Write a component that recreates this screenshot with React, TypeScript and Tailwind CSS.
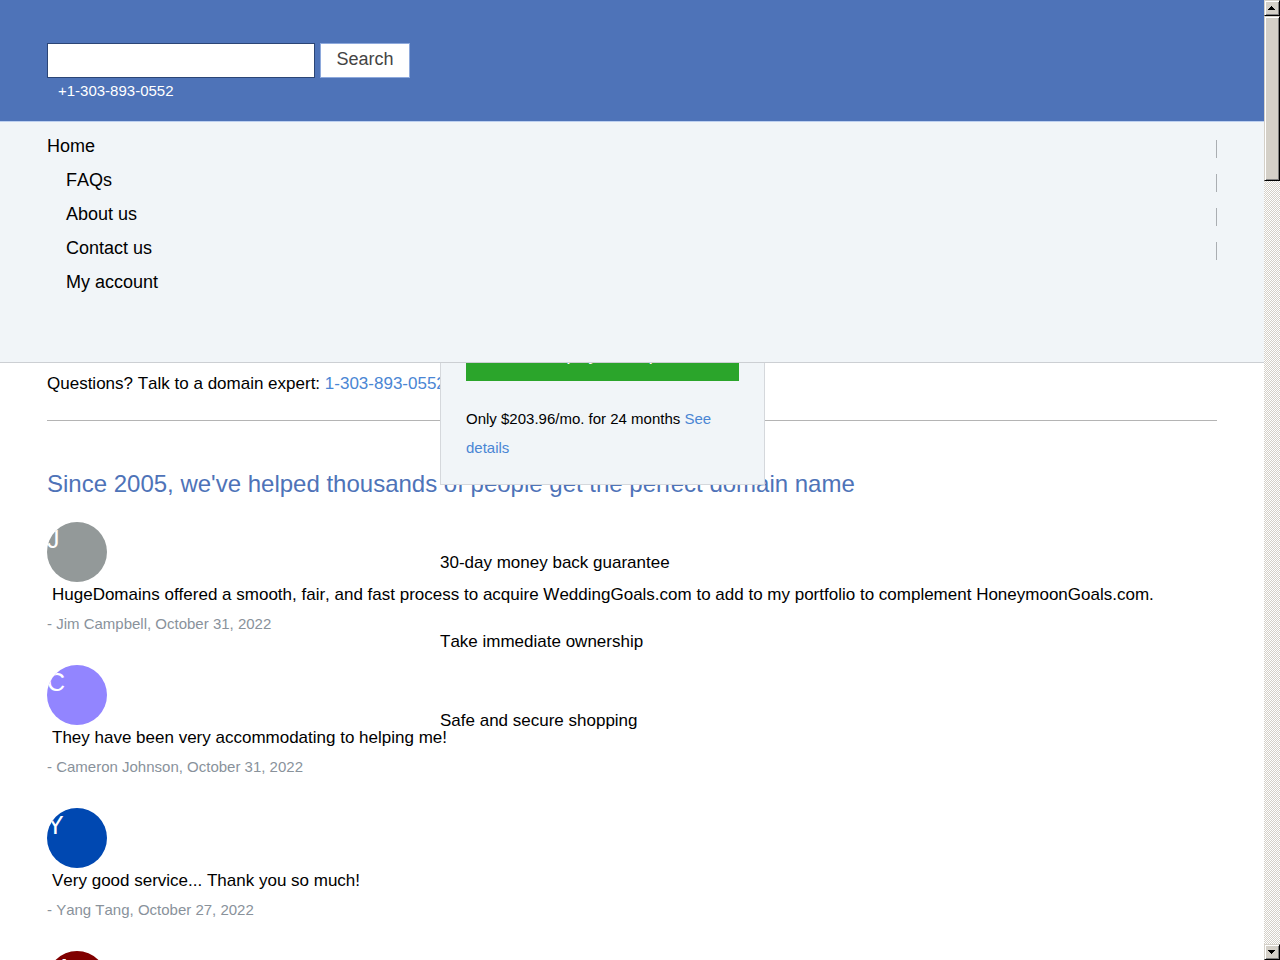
import React from "react";

const navLinks = ["Home", "FAQs", "About us", "Contact us", "My account"];

const guarantees = [
  "30-day money back guarantee",
  "Take immediate ownership",
  "Safe and secure shopping"
];

const testimonials = [
  {
    initial: "J",
    color: "bg-[#939999]",
    quote: "HugeDomains offered a smooth, fair, and fast process to acquire WeddingGoals.com to add to my portfolio to complement HoneymoonGoals.com.",
    author: "Jim Campbell, October 31, 2022"
  },
  {
    initial: "C",
    color: "bg-[#9285ff]",
    quote: "They have been very accommodating to helping me!",
    author: "Cameron Johnson, October 31, 2022"
  },
  {
    initial: "Y",
    color: "bg-[#0048b1]",
    quote: "Very good service... Thank you so much!",
    author: "Yang Tang, October 27, 2022"
  },
  {
    initial: "M",
    color: "bg-[#800000]",
    quote: "",
    author: ""
  }
];

function ScrollButton({ label, path }: { label: string; path: string }) {
  return (
    <button
      type="button"
      aria-label={label}
      className="h-4 w-4 shrink-0 border border-t-[#d4d0c8] border-l-[#d4d0c8] border-r-black border-b-black bg-[#d4d0c8] shadow-[inset_1px_1px_0_#ffffff,inset_-1px_-1px_0_#808080]"
    >
      <svg viewBox="0 0 14 14" className="h-full w-full" shapeRendering="crispEdges">
        <path d={path} fill="#000000" />
      </svg>
    </button>
  );
}

function Scrollbar() {
  return (
    <div className="flex w-4 shrink-0 flex-col bg-[repeating-conic-gradient(#d4d0c8_0%_25%,#ffffff_0%_50%)] bg-[length:2px_2px]">
      <ScrollButton label="Scroll up" path="M6 5h1v1h1v1h1v1h1v1H3V8h1V7h1V6h1z" />
      <div className="h-[165px] border border-t-[#d4d0c8] border-l-[#d4d0c8] border-r-black border-b-black bg-[#d4d0c8] shadow-[inset_1px_1px_0_#ffffff,inset_-1px_-1px_0_#808080]" />
      <div className="flex-1" />
      <ScrollButton label="Scroll down" path="M3 5h7v1H9v1H8v1H7v1H6V8H5V7H4V6H3z" />
    </div>
  );
}

function Header() {
  return (
    <header className="relative z-20">
      <div className="bg-[#4e73b8] px-[47px] pt-[43px] pb-[18px]">
        <form className="flex gap-[5px]" onSubmit={(e) => e.preventDefault()}>
          <input
            type="text"
            aria-label="Search domains"
            className="h-[35px] w-[268px] border border-[#2b4576] bg-white px-2 text-[18px] outline-none"
          />
          <button
            type="submit"
            className="h-[35px] w-[90px] border border-[#8ea9dc] bg-white pb-[3px] text-[18px] leading-[30px] text-[#444444]"
          >
            Search
          </button>
        </form>
        <a href="tel:+13038930552" className="ml-[11px] block text-[15px] leading-[25px] text-white">
          +1-303-893-0552
        </a>
      </div>
      <nav className="border-t border-b border-t-[#bdd0f0] border-b-[#cccfd3] bg-[#f1f5f8] px-[47px] pt-[7px] pb-[63px]">
        <ul>
          {navLinks.map((name, index) => (
            <li key={name} className="flex h-[34px] items-start justify-between">
              <a href="#" className={`text-[18px] leading-[34px] text-black ${index > 0 ? "pl-[19px]" : ""}`}>
                {name}
              </a>
              {index < navLinks.length - 1 && <span className="mt-[11px] h-[18px] w-px bg-[#aaaeb2]" />}
            </li>
          ))}
        </ul>
      </nav>
    </header>
  );
}

function PriceCard() {
  return (
    <aside className="absolute -top-10 left-[440px] z-10 w-[325px] border border-[#d5d8dc] bg-[#f1f5f8] px-[25px] pt-[5px] pb-[22px]">
      <button type="button" className="block h-[52px] w-full bg-[#2ba52b] pb-1 text-[20px] leading-[48px] text-white">
        Start payment plan
      </button>
      <p className="mt-[23px] text-[15px] leading-[29px] text-black">
        Only $203.96/mo. for 24 months{" "}
        <a href="#" className="text-[#4a86d4]">See details</a>
      </p>
    </aside>
  );
}

export default function App() {
  return (
    <div className="flex h-screen overflow-hidden bg-white font-['Liberation_Sans',Arial,sans-serif] text-black [font-kerning:none]">
      <div className="min-w-0 flex-1 overflow-hidden">
        <Header />
        <main className="relative px-[47px]">
          <PriceCard />
          <ul className="absolute top-[187px] left-[440px] z-10 flex flex-col gap-[53px]">
            {guarantees.map((text) => (
              <li key={text} className="text-[17px] leading-[26px]">{text}</li>
            ))}
          </ul>

          <p className="border-b border-[#b4b4b4] pt-2 pb-6 text-[17px] leading-[25px]">
            Questions? Talk to a domain expert:{" "}
            <a href="tel:+13038930552" className="text-[#4a86d4]">1-303-893-0552</a>
          </p>

          <h2 className="mt-12 text-[24px] leading-[30px] text-[#4e73b8]">
            Since 2005, we've helped thousands of people get the perfect domain name
          </h2>

          <div className="mt-[23px] flex flex-col gap-[28px]">
            {testimonials.map((item) => (
              <article key={item.initial}>
                <div className={`h-[60px] w-[60px] overflow-hidden rounded-full text-[25px] leading-[34px] text-white ${item.color}`}>
                  {item.initial}
                </div>
                <p className="pl-[5px] text-[17px] leading-[26px]">{item.quote}</p>
                <p className="pt-[3px] text-[15px] leading-[26px] text-[#89929b]">
                  {item.author && `- ${item.author}`}
                </p>
              </article>
            ))}
          </div>
        </main>
      </div>
      <Scrollbar />
    </div>
  );
}
